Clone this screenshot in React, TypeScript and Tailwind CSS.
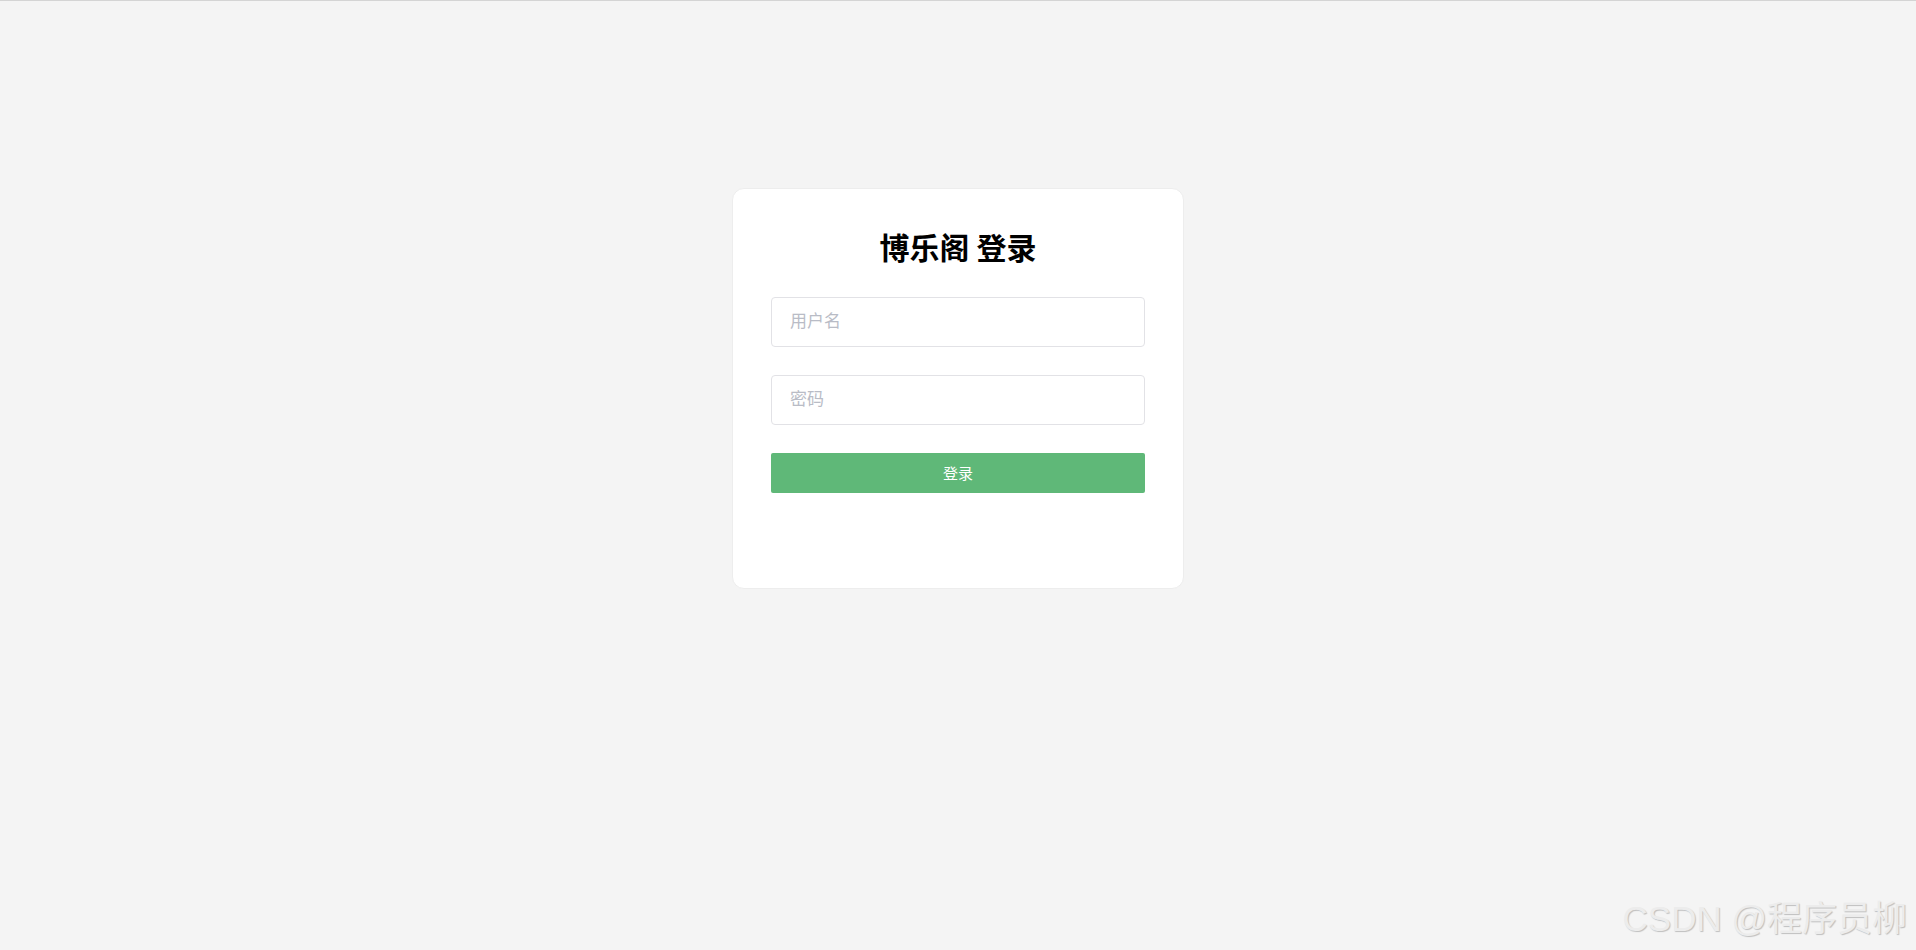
import { useState } from "react";

// Login page for 博乐阁
const App = () => {
    const [username, setUsername] = useState("");
    const [password, setPassword] = useState("");

    return (
        <div
            className="relative min-h-screen w-full border-t border-[#d4d4d4] bg-[#f4f4f4]"
            style={{ fontFamily: '"Microsoft YaHei", "Noto Sans CJK SC", "Noto Sans", sans-serif' }}
        >
            <div className="flex justify-center pt-[187px]">
                {/* Login card */}
                <div className="w-[452px] rounded-[12px] border border-[#ededed] bg-white px-[38px] pb-[95px] pt-[34px]">
                    <h1 className="text-center text-[30px] font-bold leading-[46px] text-black">
                        博乐阁 登录
                    </h1>

                    <form
                        className="mt-[28px] flex flex-col"
                        onSubmit={e => e.preventDefault()}
                    >
                        <input
                            type="text"
                            value={username}
                            onChange={e => setUsername(e.target.value)}
                            placeholder="用户名"
                            className="h-[50px] w-full rounded-[4px] border border-[#e2e2e6] bg-white px-[18px] pb-[5px] text-[17px] text-[#333] outline-none placeholder:text-[#b9bcc6]"
                        />
                        <input
                            type="password"
                            value={password}
                            onChange={e => setPassword(e.target.value)}
                            placeholder="密码"
                            className="mt-[28px] h-[50px] w-full rounded-[4px] border border-[#e2e2e6] bg-white px-[18px] pb-[5px] text-[17px] text-[#333] outline-none placeholder:text-[#b9bcc6]"
                        />
                        <button
                            type="submit"
                            className="mt-[28px] h-[40px] w-full rounded-[2px] bg-[#5fb878] text-[15px] text-white"
                        >
                            登录
                        </button>
                    </form>
                </div>
            </div>

            {/* Watermark */}
            <div
                className="absolute bottom-[14px] right-[9px] text-[35px] font-normal leading-none text-[#ececec]"
                style={{
                    fontFamily: '"Liberation Sans", "Noto Sans CJK SC", sans-serif',
                    textShadow: "1px 1px 1px rgba(0, 0, 0, 0.22)",
                }}
            >
                CSDN @程序员柳
            </div>
        </div>
    );
};

export default App;
